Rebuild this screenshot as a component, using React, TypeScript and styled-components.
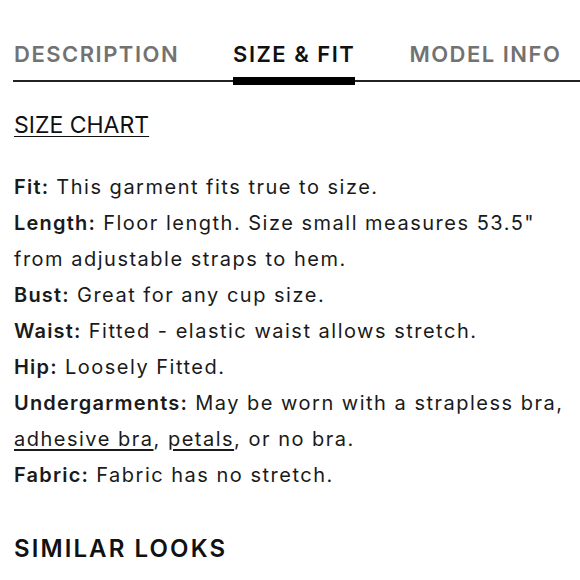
import React from 'react';
import styled, { createGlobalStyle } from 'styled-components';

const GlobalStyle = createGlobalStyle`
  html, body {
    margin: 0;
    padding: 0;
    background: #fff;
  }
  body {
    font-family: Inter, "Liberation Sans", sans-serif;
    color: #1a1a1a;
    overflow: hidden;
  }
`;

const Page = styled.div`
  width: 580px;
  height: 580px;
  overflow: hidden;
  padding-left: 14px;
  box-sizing: border-box;
`;

const TabBar = styled.nav`
  display: flex;
  gap: 54px;
  margin-top: 42px;
  margin-left: -1px;
  padding-left: 1px;
  border-bottom: 2px solid #222;
`;

const Tab = styled.div<{ $active?: boolean }>`
  position: relative;
  padding-bottom: 14px;
  font-size: 22px;
  line-height: 24px;
  font-weight: 600;
  letter-spacing: 1.5px;
  text-transform: uppercase;
  white-space: nowrap;
  color: ${({ $active }) => ($active ? '#111' : '#727272')};

  &::after {
    content: '';
    display: ${({ $active }) => ($active ? 'block' : 'none')};
    position: absolute;
    left: 0;
    right: 0;
    bottom: -5px;
    height: 8px;
    background: #000;
  }
`;

const SizeChart = styled.a`
  display: inline-block;
  margin-top: 30px;
  font-size: 23px;
  line-height: 26px;
  color: #111;
  text-decoration: underline;
  text-underline-offset: 3px;
  text-decoration-thickness: 1px;
`;

const SpecList = styled.div`
  margin-top: 31px;
  width: 566px;
`;

const SpecRow = styled.p`
  margin: 0;
  font-size: 20px;
  line-height: 36px;
  letter-spacing: 1.5px;
  color: #1a1a1a;
`;

const Label = styled.strong`
  font-weight: 600;
  letter-spacing: 1.2px;
`;

const InlineLink = styled.a`
  color: #1a1a1a;
  text-decoration: underline;
  text-underline-offset: 3px;
`;

const SectionTitle = styled.h2`
  margin: 43px 0 0;
  font-size: 24px;
  line-height: 26px;
  font-weight: 600;
  letter-spacing: 2.1px;
  color: #111;
`;

const specs: { label: string; text: React.ReactNode }[] = [
  { label: 'Fit:', text: 'This garment fits true to size.' },
  { label: 'Length:', text: 'Floor length. Size small measures 53.5" from adjustable straps to hem.' },
  { label: 'Bust:', text: 'Great for any cup size.' },
  { label: 'Waist:', text: 'Fitted - elastic waist allows stretch.' },
  { label: 'Hip:', text: 'Loosely Fitted.' },
  {
    label: 'Undergarments:',
    text: (
      <>
        May be worn with a strapless bra, <InlineLink href="#">adhesive bra</InlineLink>,{' '}
        <InlineLink href="#">petals</InlineLink>, or no bra.
      </>
    ),
  },
  { label: 'Fabric:', text: 'Fabric has no stretch.' },
];

export default function App() {
  return (
    <>
      <GlobalStyle />
      <Page>
        <TabBar>
          <Tab>Description</Tab>
          <Tab $active>Size &amp; Fit</Tab>
          <Tab>Model Info</Tab>
        </TabBar>
        <SizeChart href="#">SIZE CHART</SizeChart>
        <SpecList>
          {specs.map((s) => (
            <SpecRow key={s.label}>
              <Label>{s.label}</Label> {s.text}
            </SpecRow>
          ))}
        </SpecList>
        <SectionTitle>SIMILAR LOOKS</SectionTitle>
      </Page>
    </>
  );
}
